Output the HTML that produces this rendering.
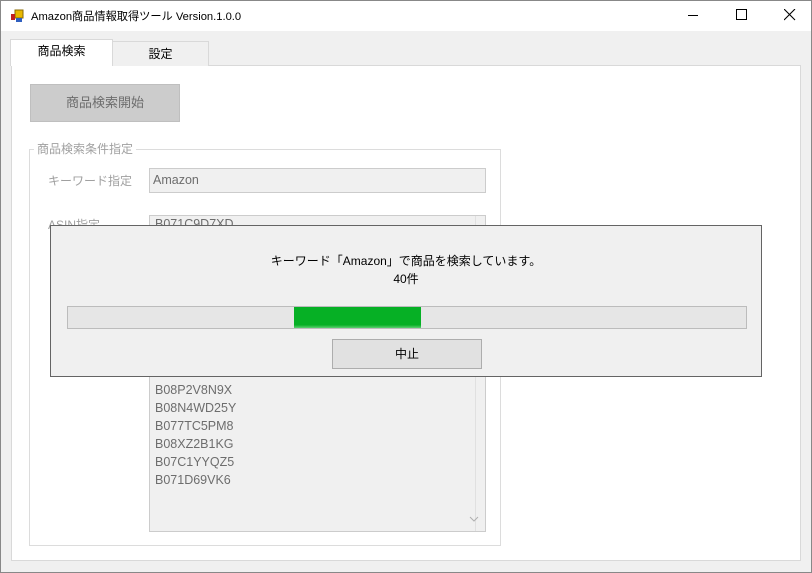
<!DOCTYPE html><html><head><meta charset="utf-8"><style>
*{margin:0;padding:0;box-sizing:border-box}
body{width:812px;height:573px;position:relative;background:#f0f0f0;font-family:"Liberation Sans","Noto Sans CJK JP",sans-serif;font-size:12px;overflow:hidden}
.a{position:absolute}
</style></head><body>
<div class="a" style="left:0;top:0;width:812px;height:31px;background:#fff"></div>
<div class="a" style="left:0;top:0;width:812px;height:573px;border:1px solid #888"></div>
<svg class="a" style="left:10px;top:9px" width="14" height="14"><rect x="5" y="1" width="8" height="8" fill="#e8b800" stroke="#8a6a00" stroke-width="1"/><rect x="1" y="5" width="4" height="6" fill="#c02020"/><rect x="6" y="9" width="6" height="4" fill="#3060c0"/></svg>
<div class="a" style="left:31px;top:8px;font-size:11.2px;color:#000">Amazon商品情報取得ツール Version.1.0.0</div>
<div class="a" style="left:688px;top:15px;width:10px;height:1px;background:#000"></div>
<div class="a" style="left:736px;top:9px;width:11px;height:11px;border:1px solid #000"></div>
<svg class="a" style="left:784px;top:9px" width="12" height="12"><path d="M0 0L11 11M11 0L0 11" stroke="#000" stroke-width="1.1"/></svg>
<div class="a" style="left:11px;top:65px;width:790px;height:496px;background:#fff;border:1px solid #d9d9d9"></div>
<div class="a" style="left:112px;top:41px;width:97px;height:25px;background:#f0f0f0;border:1px solid #d9d9d9;border-bottom:none;text-align:center;line-height:24px;font-size:12px">設定</div>
<div class="a" style="left:10px;top:39px;width:103px;height:27px;background:#fff;border:1px solid #d9d9d9;border-bottom:none;text-align:center;line-height:22px;font-size:12px">商品検索</div>
<div class="a" style="left:30px;top:84px;width:150px;height:38px;background:#cccccc;border:1px solid #bfbfbf;text-align:center;line-height:36px;color:#6d6d6d;font-size:13px">商品検索開始</div>
<div class="a" style="left:29px;top:149px;width:472px;height:397px;border:1px solid #dcdcdc"></div>
<div class="a" style="left:34px;top:140px;background:#fff;padding:0 3px;color:#a0a0a0;font-size:12px">商品検索条件指定</div>
<div class="a" style="left:48px;top:172px;color:#a0a0a0;font-size:12px">キーワード指定</div>
<div class="a" style="left:149px;top:168px;width:337px;height:25px;background:#f0f0f0;border:1px solid #ccc;color:#6d6d6d;padding:4px 0 0 3px;font-size:12.5px">Amazon</div>
<div class="a" style="left:48px;top:216px;color:#a0a0a0">ASIN指定</div>
<div class="a" style="left:149px;top:215px;width:337px;height:317px;background:#f0f0f0;border:1px solid #ccc"></div>
<div class="a" style="left:475px;top:216px;width:1px;height:315px;background:#e0e0e0"></div>
<svg class="a" style="left:469px;top:515px" width="10" height="8"><path d="M1 2L5 6L9 2" stroke="#b0b0b0" fill="none"/></svg>
<div class="a" style="left:155px;top:217px;color:#6d6d6d;font-size:12.5px">B071C9D7XD</div>
<div class="a" style="left:155px;top:381px;color:#6d6d6d;font-size:12.5px;line-height:18px">B08P2V8N9X<br>B08N4WD25Y<br>B077TC5PM8<br>B08XZ2B1KG<br>B07C1YYQZ5<br>B071D69VK6</div>
<div class="a" style="left:50px;top:225px;width:712px;height:152px;background:#f0f0f0;border:1px solid #646464"></div>
<div class="a" style="left:50px;top:252px;width:712px;text-align:center;font-size:12px;line-height:18px;color:#000">キーワード「Amazon」で商品を検索しています。<br>40件</div>
<div class="a" style="left:67px;top:306px;width:680px;height:23px;background:#e6e6e6;border:1px solid #bcbcbc"></div>
<div class="a" style="left:294px;top:307px;width:127px;height:21px;background:linear-gradient(#06b025 85%,#5cd070)"></div>
<div class="a" style="left:332px;top:339px;width:150px;height:30px;background:#e1e1e1;border:1px solid #adadad;text-align:center;line-height:28px;font-size:12px">中止</div>
</body></html>
